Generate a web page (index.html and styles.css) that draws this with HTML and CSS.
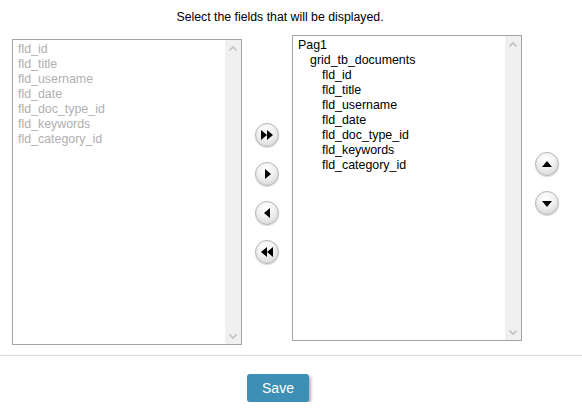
FILE: index.html
```html
<!DOCTYPE HTML>
<html>
    <head>
        <meta charset="UTF-8">
        <title>Select fields</title>
        <link rel="stylesheet" href="styles.css">
    </head>
    <body>
        <p class="title">Select the fields that will be displayed.</p>
        <div class="picker">
            <div class="list list-left">
                <div class="items">
                    <div>fld_id</div>
                    <div>fld_title</div>
                    <div>fld_username</div>
                    <div>fld_date</div>
                    <div>fld_doc_type_id</div>
                    <div>fld_keywords</div>
                    <div>fld_category_id</div>
                </div>
                <div class="scroll">
                    <svg width="8" height="5" viewBox="0 0 8 5"><polyline points="0.5,4.5 4,1 7.5,4.5"/></svg>
                    <svg width="8" height="5" viewBox="0 0 8 5"><polyline points="0.5,0.5 4,4 7.5,0.5"/></svg>
                </div>
            </div>
            <div class="moves">
                <button class="round"><svg width="12" height="10" viewBox="0 0 12 10"><polygon points="0,0 6,5 0,10"/><polygon points="6,0 12,5 6,10"/></svg></button>
                <button class="round"><svg width="7" height="10" viewBox="0 0 7 10"><polygon points="1,0 7,5 1,10"/></svg></button>
                <button class="round"><svg width="7" height="10" viewBox="0 0 7 10"><polygon points="6,0 0,5 6,10"/></svg></button>
                <button class="round"><svg width="12" height="10" viewBox="0 0 12 10"><polygon points="6,0 0,5 6,10"/><polygon points="12,0 6,5 12,10"/></svg></button>
            </div>
            <div class="list list-right">
                <div class="items">
                    <div>Pag1</div>
                    <div class="lv1">grid_tb_documents</div>
                    <div class="lv2">fld_id</div>
                    <div class="lv2">fld_title</div>
                    <div class="lv2">fld_username</div>
                    <div class="lv2">fld_date</div>
                    <div class="lv2">fld_doc_type_id</div>
                    <div class="lv2">fld_keywords</div>
                    <div class="lv2">fld_category_id</div>
                </div>
                <div class="scroll">
                    <svg width="8" height="5" viewBox="0 0 8 5"><polyline points="0.5,4.5 4,1 7.5,4.5"/></svg>
                    <svg width="8" height="5" viewBox="0 0 8 5"><polyline points="0.5,0.5 4,4 7.5,0.5"/></svg>
                </div>
            </div>
            <div class="order">
                <button class="round"><svg width="10" height="7" viewBox="0 0 10 7"><polygon points="0,6 5,0 10,6"/></svg></button>
                <button class="round"><svg width="10" height="7" viewBox="0 0 10 7"><polygon points="0,1 10,1 5,7"/></svg></button>
            </div>
        </div>
        <div class="bar">
            <button class="save">Save</button>
        </div>
    </body>
</html>
```

FILE: styles.css
```css
body {
    margin: 0;
    font-family: 'Liberation Sans', Arial, sans-serif;
    font-size: 12px;
    color: #000;
    background: #fff;
}
.title {
    margin: 0;
    padding: 10px 22px 0 0;
    line-height: 14px;
    text-align: center;
    font-size: 12.3px;
}
.picker {
    display: flex;
    align-items: flex-start;
    padding: 11px 0 0 12px;
    height: 320px;
    border-bottom: 1px solid #dcdcdc;
}
.list {
    display: flex;
    width: 230px;
    height: 306px;
    box-sizing: border-box;
    border: 1px solid #a5a5a5;
    background: #fff;
}
.list-left {margin-top: 4px;}
.items {
    flex: 1;
    padding: 2px 5px;
    line-height: 15px;
    font-size: 12.4px;
}
.list-left .items {color: #b0b0b0;}
.lv1 {padding-left: 12px;}
.lv2 {padding-left: 24px;}
.scroll {
    width: 16px;
    background: #f0f0f0;
    display: flex;
    flex-direction: column;
    justify-content: space-between;
    align-items: center;
    padding: 6px 0 5px;
}
.scroll svg {
    display: block;
    fill: none;
    stroke: #c2c2c2;
    stroke-width: 1.6;
}
.moves, .order {
    width: 50px;
    display: flex;
    flex-direction: column;
    align-items: center;
    gap: 15px;
}
.moves {padding-top: 88px;}
.order {padding-top: 117px;}
.round {
    width: 24px;
    height: 24px;
    padding: 0;
    border-radius: 50%;
    border: 1px solid #b4b4b4;
    background: radial-gradient(circle at 45% 30%, #ffffff 0%, #f2f2f2 40%, #cfcfcf 100%);
    box-shadow: 0 1px 1px rgba(0,0,0,0.15);
    display: flex;
    align-items: center;
    justify-content: center;
}
.round svg {fill: #000; display: block;}
.bar {
    padding: 18px 0 0 247px;
}
.save {
    width: 62px;
    height: 28px;
    border: none;
    border-radius: 3px;
    background: #3e8fb5;
    color: #fff;
    font-family: 'Liberation Sans', Arial, sans-serif;
    font-size: 14px;
    box-shadow: 2px 2px 3px rgba(0,0,0,0.3);
}
```
